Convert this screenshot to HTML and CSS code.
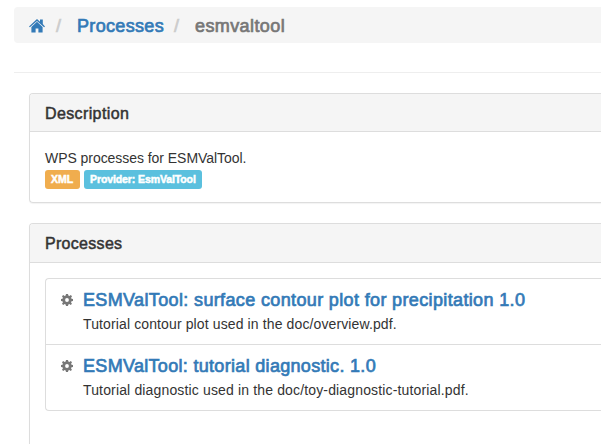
FILE: index.html
```html
<!DOCTYPE html>
<html lang="en">
<head>
<meta charset="utf-8">
<title>esmvaltool</title>
<link rel="stylesheet" href="styles.css">
</head>
<body>
<svg class="defs" width="0" height="0">
  <symbol id="gear" viewBox="0 0 12 12"><path fill-rule="evenodd" d="M5 0h2l.35 1.6 1.05.45L9.8 1.1l1.2 1.2-.9 1.4.45 1L12 5v2l-1.5.35-.45 1.05.9 1.35-1.2 1.2-1.4-.9-1 .4L7 12H5l-.35-1.55-1.05-.4-1.4.9L1 9.75l.9-1.35-.4-1.05L0 7V5l1.5-.3.4-1L1 2.3l1.2-1.2 1.4.95 1.05-.45zM6 4.1a1.9 1.9 0 1 0 0 3.8 1.9 1.9 0 0 0 0-3.8z"/></symbol>
</svg>
<nav class="breadcrumb">
  <a class="home" href="#" aria-label="Home"><svg width="16" height="14" viewBox="0 0 16 14"><path d="M8 0 11 2.7V.6h2.8v4.5L16 7.4l-.9.9L8 1.9.9 8.3 0 7.4z"/><path d="M8 2.8l5.6 5.1v5.6H9.4V9.4H6.6v4.1H2.4V7.9z"/></svg></a>
  <span class="slash">/</span>
  <a class="crumb" href="#">Processes</a>
  <span class="slash second">/</span>
  <span class="current">esmvaltool</span>
</nav>
<hr>
<section class="panel description">
  <h3>Description</h3>
  <div class="body">
    <p class="summary">WPS processes for ESMValTool.</p>
    <div class="labels"><span class="label xml">XML</span><span class="label provider">Provider: EsmValTool</span></div>
  </div>
</section>
<section class="panel processes">
  <h3>Processes</h3>
  <div class="body">
    <ul class="list">
      <li><svg class="gear"><use href="#gear"/></svg><div><h4><a class="t1" href="#">ESMValTool: surface contour plot for precipitation 1.0</a></h4><p class="d1">Tutorial contour plot used in the doc/overview.pdf.</p></div></li>
      <li><svg class="gear"><use href="#gear"/></svg><div><h4><a class="t2" href="#">ESMValTool: tutorial diagnostic. 1.0</a></h4><p class="d2">Tutorial diagnostic used in the doc/toy-diagnostic-tutorial.pdf.</p></div></li>
    </ul>
  </div>
</section>
</body>
</html>
```
FILE: styles.css
```css
* { box-sizing: border-box; }
body {
  margin: 0;
  padding: 7px 0 0 14px;
  height: 444px;
  overflow: hidden;
  background: #fff;
  color: #333;
  font: 14px/20px "Liberation Sans", Arial, sans-serif;
  white-space: nowrap;
}
.defs { display: block; position: absolute; }
a { color: #337ab7; text-decoration: none; }
h3, h4, p, ul { margin: 0; padding: 0; font-weight: 400; }
.breadcrumb {
  display: flex;
  align-items: center;
  height: 36px;
  padding: 1px 15px 0 15px;
  background: #f5f5f5;
  border-radius: 4px 0 0 4px;
  font-size: 18px;
  -webkit-text-stroke: .7px currentColor;
}
.home { display: flex; width: 27px; }
.home svg { fill: #337ab7; stroke: none; }
.slash { width: 21px; color: #ccc; }
.crumb { width: 97px; letter-spacing: .33px; }
.current { color: #777; letter-spacing: .4px; }
hr { margin: 29px 0 20px; border: 0; border-top: 1px solid #eee; }
.panel {
  margin-left: 15px;
  border: 1px solid #ddd;
  border-right: 0;
  border-radius: 4px 0 0 4px;
  box-shadow: 0 1px 1px rgba(0, 0, 0, .05);
}
.panel h3 {
  height: 38px;
  padding: 11px 15px 0;
  background: #f5f5f5;
  border-bottom: 1px solid #ddd;
  border-radius: 3px 0 0 0;
  font-size: 16px;
  line-height: 18px;
  letter-spacing: .38px;
  -webkit-text-stroke: .5px currentColor;
}
.description { height: 110px; }
.body { padding: 15px 0 0 15px; }
.summary { padding-top: 1px; letter-spacing: -.05px; }
.labels { display: flex; gap: 4px; padding-top: 2px; }
.label {
  height: 19px;
  padding: 0 6px;
  border-radius: 3px;
  color: #fff;
  font-size: 10.5px;
  font-weight: 700;
  line-height: 19px;
  -webkit-text-stroke: .5px currentColor;
}
.xml { width: 35px; background: #f0ad4e; }
.provider { width: 118px; background: #5bc0de; letter-spacing: -.1px; }
.processes { margin-top: 20px; height: 241px; }
.processes h3 { height: 39px; letter-spacing: .3px; }
.list { list-style: none; border: 1px solid #ddd; border-right: 0; border-radius: 4px 0 0 4px; }
.list li { display: flex; height: 65px; padding: 11px 0 0 15px; }
.list li + li { height: 66px; border-top: 1px solid #ddd; }
.gear { flex: none; width: 12px; height: 12px; margin: 4px 10px 0 0; fill: #777; }
.list h4 { height: 20px; font-size: 18px; line-height: 20px; -webkit-text-stroke: .7px currentColor; }
.list p { padding-top: 4px; }
.t1 { letter-spacing: .36px; }
.t2 { letter-spacing: .31px; }
.d1 { letter-spacing: .12px; }
.d2 { letter-spacing: .15px; }
```
